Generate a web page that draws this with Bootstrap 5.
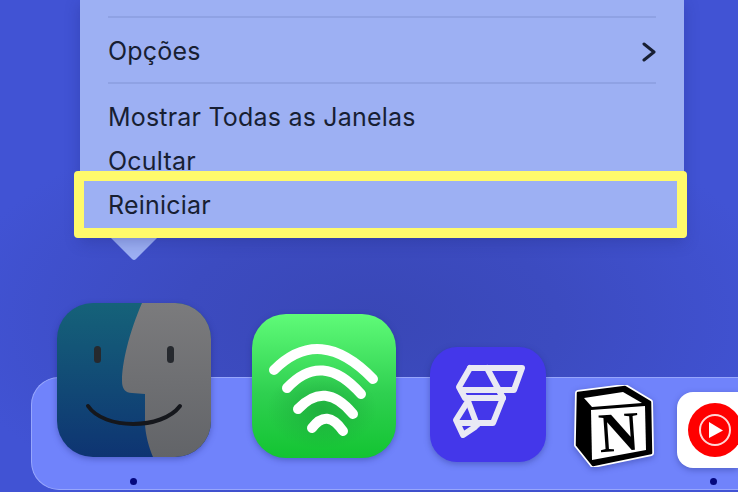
<!DOCTYPE html>
<html lang="pt-BR">
<head>
<meta charset="UTF-8">
<meta name="viewport" content="width=device-width, initial-scale=1.0">
<title>Dock menu</title>
<link href="https://cdn.jsdelivr.net/npm/bootstrap@5.3.0/dist/css/bootstrap.min.css" rel="stylesheet">
<style>
  html, body { height: 100%; }
  body {
    width: 738px; height: 492px; overflow: hidden; position: relative;
    background: radial-gradient(ellipse 420px 220px at 370px 320px, #3947b6 0, #3c4bc0 45%, #4153d4 100%);
    font-family: Inter, "Liberation Sans", sans-serif;
  }
  .dock-menu {
    width: 604px; height: 238px; margin-left: 80px;
    background: #9db0f3; color: #181f33;
    font-size: 25px; letter-spacing: .2px;
    padding: 16px 28px 0;
    box-shadow: 0 4px 14px rgba(30, 40, 120, .3);
    position: relative;
  }
  .menu-rule { height: 2px; background: #8fa2e4; }
  .menu-line { height: 44px; line-height: 44px; }
  .menu-opt { height: 64px; padding-top: 4px; }
  .menu-group { padding-top: 11px; }
  .menu-hl {
    position: absolute; left: -6px; top: 171px; width: 613px; height: 67px;
    border: 10px solid #fffa6b; border-radius: 4px;
  }
  .menu-tip { display: block; margin-left: 111px; }
  .dock-shelf {
    position: absolute; left: 31px; top: 377px; width: 707px; height: 113px;
    background: #7083fb; border: 1.5px solid #97a6fc; border-right: 0;
    border-radius: 28px 0 0 28px;
  }
  .dock-app { position: absolute; }
  .dock-app svg { display: block; filter: drop-shadow(0 2px 3px rgba(20, 30, 110, .35)); }
  .dock-dot { position: absolute; width: 7px; height: 7px; border-radius: 50%; background: #05087e; }
  .app-finder { left: 57px; top: 303px; }
  .app-wifi { left: 252px; top: 314px; }
  .app-flow { left: 430px; top: 347px; }
  .app-notion { left: 574px; top: 385px; }
  .app-yt { left: 677px; top: 392px; }
  .dot-finder { left: 130px; top: 478px; }
  .dot-yt { left: 710px; top: 478px; }
  .notion-n { font-family: "Liberation Serif", serif; font-weight: 700; font-size: 56px; }
</style>
</head>
<body>
  <div class="dock-menu">
    <div class="menu-rule"></div>
    <div class="d-flex align-items-center justify-content-between menu-opt">
      <span>Opções</span>
      <svg width="14" height="20" viewBox="0 0 14 20"><path d="M2 2l10 8-10 8" fill="none" stroke="#181f33" stroke-width="3" stroke-linecap="round" stroke-linejoin="round"/></svg>
    </div>
    <div class="menu-rule"></div>
    <div class="menu-group">
      <div class="menu-line">Mostrar Todas as Janelas</div>
      <div class="menu-line">Ocultar</div>
      <div class="menu-line">Reiniciar</div>
    </div>
    <div class="menu-hl"></div>
  </div>
  <svg class="menu-tip" width="46" height="23" viewBox="0 0 46 23"><path d="M0 0H46L25 21Q23 23 21 21Z" fill="#9db0f3"/></svg>

  <div class="dock-shelf"></div>

  <div class="dock-app app-finder">
    <svg width="154" height="154" viewBox="0 0 154 154">
      <defs>
        <linearGradient id="fb" x1="0" y1="0" x2="0" y2="1"><stop offset="0" stop-color="#156279"/><stop offset="1" stop-color="#0e3472"/></linearGradient>
        <linearGradient id="fg" x1="0" y1="0" x2="0" y2="1"><stop offset="0" stop-color="#7b7b7d"/><stop offset="1" stop-color="#626468"/></linearGradient>
        <clipPath id="fc"><rect width="154" height="154" rx="36"/></clipPath>
      </defs>
      <g clip-path="url(#fc)">
        <rect width="154" height="154" fill="url(#fb)"/>
        <path d="M85 0C72 30 65 60 65 78Q65 90 75 90L88 91L88 120C88 130 92 145 96 154H154V0Z" fill="url(#fg)"/>
        <rect x="37" y="43" width="7" height="17" rx="3.5" fill="#26292e"/>
        <rect x="110" y="43" width="7" height="17" rx="3.5" fill="#26292e"/>
        <path d="M31 103C47 127 105 127 123 103" fill="none" stroke="#15171c" stroke-width="4" stroke-linecap="round"/>
      </g>
    </svg>
  </div>
  <div class="dock-app app-wifi">
    <svg width="144" height="144" viewBox="0 0 144 144">
      <defs>
        <linearGradient id="wg" x1="0" y1="0" x2="0" y2="1"><stop offset="0" stop-color="#5ffb78"/><stop offset=".55" stop-color="#2fd050"/><stop offset="1" stop-color="#13c432"/></linearGradient>
        <radialGradient id="wd"><stop offset="0" stop-color="#1a9c38" stop-opacity=".6"/><stop offset="1" stop-color="#1a9c38" stop-opacity="0"/></radialGradient>
      </defs>
      <rect width="144" height="144" rx="34" fill="url(#wg)"/>
      <ellipse cx="70" cy="95" rx="55" ry="40" fill="url(#wd)"/>
      <g fill="none" stroke="#fff" stroke-width="10" stroke-linecap="round">
        <path d="M22 56Q68 10 121 65"/>
        <path d="M35 74Q70 36 109 80"/>
        <path d="M46 95Q73 66 101 100"/>
        <path d="M60 114Q75 94 91 117"/>
      </g>
    </svg>
  </div>
  <div class="dock-app app-flow">
    <svg width="116" height="115" viewBox="0 0 116 115">
      <rect width="116" height="115" rx="27" fill="#4437ea"/>
      <g fill="none" stroke="#e9e9f4" stroke-width="6" stroke-linecap="round" stroke-linejoin="round">
        <path d="M40 21H92L84 43H31"/>
        <path d="M40 21L29 40L35 51H73"/>
        <path d="M57 21L73 51L63 76H28"/>
        <path d="M38 54L26 73L33 88L45 80"/>
        <path d="M38 54L47 78"/>
      </g>
    </svg>
  </div>
  <div class="dock-app app-notion">
    <svg width="80" height="82" viewBox="0 0 80 82">
      <path d="M4 8L51 2L76 17L77 68L19 80L3 60Z" fill="#fff" stroke="#fff" stroke-width="6" stroke-linejoin="round"/>
      <path d="M4 8L51 2L76 17L77 68L19 80L3 60Z" fill="#000" stroke="#000" stroke-width="2.5" stroke-linejoin="round"/>
      <path d="M10 13L49 7L68 18L18 22Z" fill="#fff"/>
      <path d="M17 25L71 21L72 65L18 75Z" fill="#fff"/>
      <text class="notion-n" x="45" y="66" text-anchor="middle" transform="rotate(-4 45 50)">N</text>
    </svg>
  </div>
  <div class="dock-app app-yt">
    <svg width="61" height="76" viewBox="0 0 61 76">
      <rect width="90" height="76" rx="16" fill="#fff"/>
      <circle cx="38" cy="38" r="27" fill="#f00"/>
      <circle cx="38" cy="38" r="15" fill="none" stroke="#ffd6d6" stroke-width="2"/>
      <path d="M32 30L46 38.500L32 46Z" fill="#fff"/>
    </svg>
  </div>
  <div class="dock-dot dot-finder"></div>
  <div class="dock-dot dot-yt"></div>
  <script src="https://cdn.jsdelivr.net/npm/bootstrap@5.3.0/dist/js/bootstrap.bundle.min.js"></script>
</body>
</html>
